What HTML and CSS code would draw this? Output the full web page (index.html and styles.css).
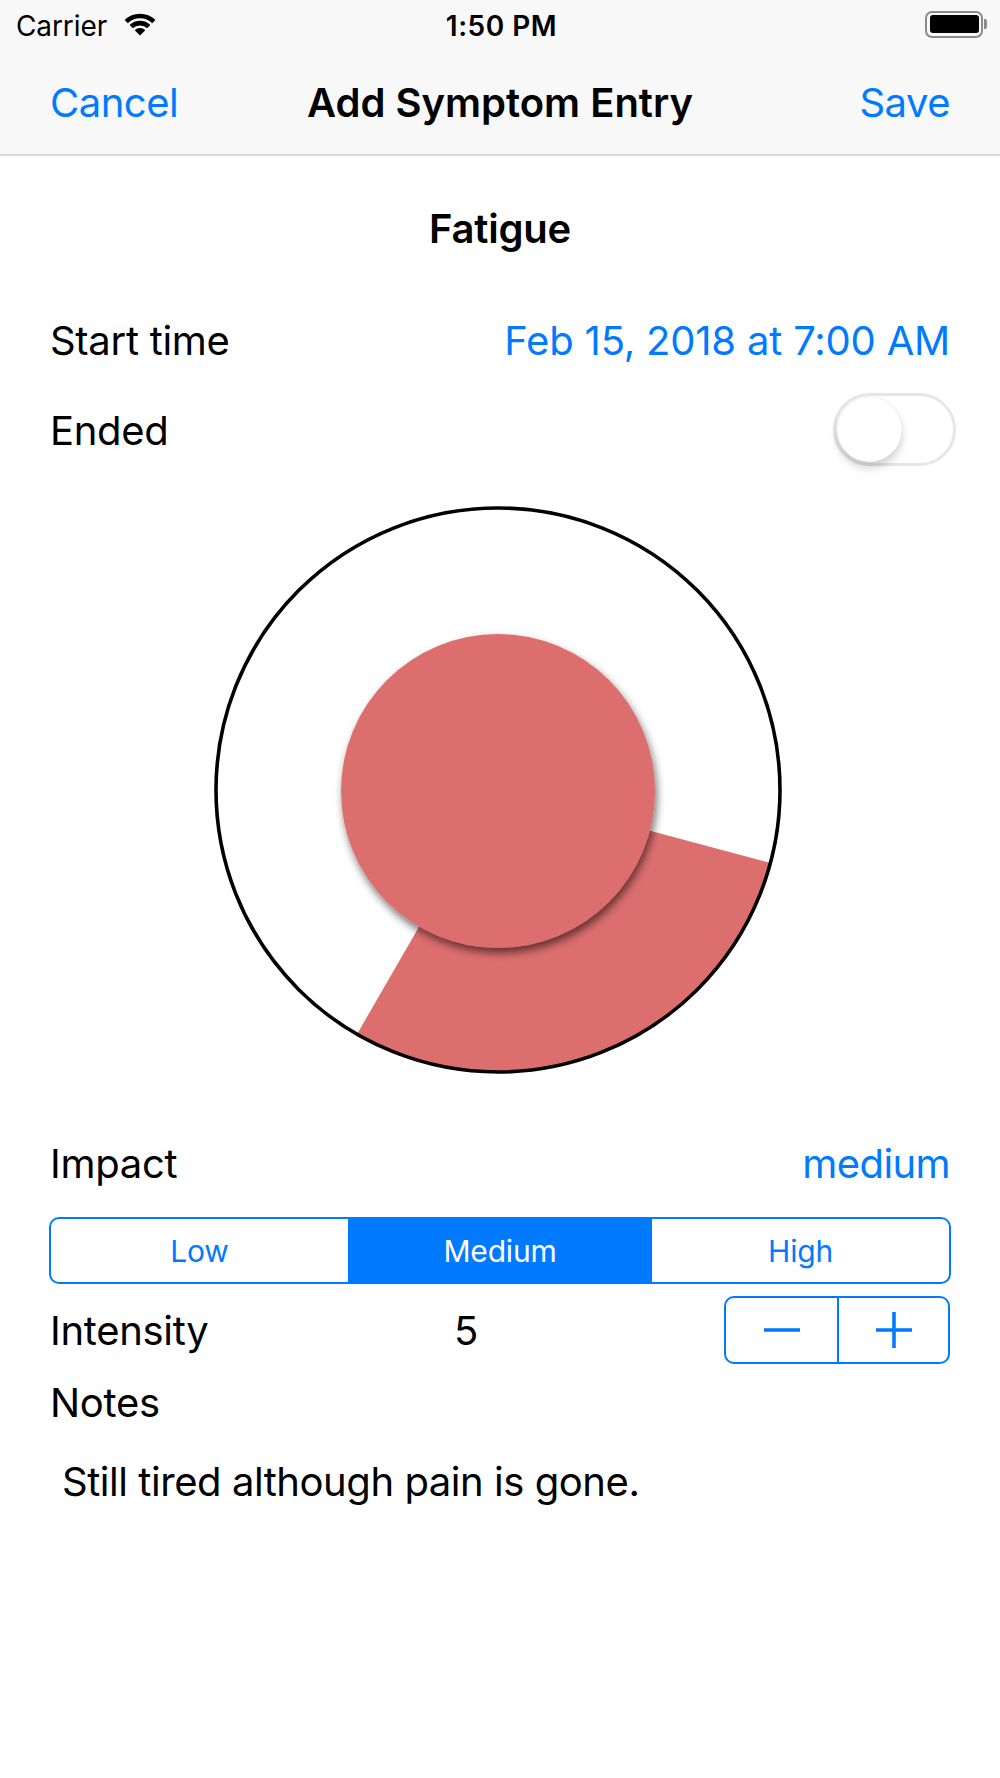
FILE: index.html
```html
<!DOCTYPE html>
<html>
<head>
<meta charset="utf-8">
<link rel="stylesheet" href="styles.css">
</head>
<body>
<div class="screen">
  <div class="statusbar">
    <div class="sb-left">
      <span class="carrier">Carrier</span>
      <svg class="wifi" width="34" height="26" viewBox="0 0 34 26">
        <path d="M17 24.5 L11.7 19.2 A7.5 7.5 0 0 1 22.3 19.2 Z" fill="#000"/>
        <path d="M8.2 15.7 A12.5 12.5 0 0 1 25.8 15.7" fill="none" stroke="#000" stroke-width="4.6"/>
        <path d="M3.2 10.7 A19.5 19.5 0 0 1 30.8 10.7" fill="none" stroke="#000" stroke-width="4.6"/>
      </svg>
    </div>
    <div class="sb-time">1:50 PM</div>
    <div class="sb-right">
      <div class="battery"><div class="battery-fill"></div></div>
      <div class="battery-nub"></div>
    </div>
  </div>
  <div class="navbar">
    <span class="nav-btn nav-left">Cancel</span>
    <span class="nav-title">Add Symptom Entry</span>
    <span class="nav-btn nav-right">Save</span>
  </div>
  <div class="content">
    <div class="symptom">Fatigue</div>
    <div class="row row-start">
      <span class="label">Start time</span>
      <span class="value-blue">Feb 15, 2018 at 7:00 AM</span>
    </div>
    <div class="row row-ended">
      <span class="label">Ended</span>
      <div class="toggle"><div class="knob"></div></div>
    </div>
    <div class="chart">
      <svg width="600" height="600" viewBox="0 0 600 600">
        <defs>
          <filter id="sh" x="-20%" y="-20%" width="140%" height="140%">
            <feDropShadow dx="2" dy="5" stdDeviation="4" flood-color="#000" flood-opacity="0.55"/>
          </filter>
        </defs>
        <path d="M298 300 L570.4 373 A282 282 0 0 1 157 544.2 Z" fill="#DD6E6E"/>
        <circle cx="298" cy="300" r="282" fill="none" stroke="#000" stroke-width="3.6"/>
        <circle cx="298" cy="301" r="157" fill="#DD6E6E" filter="url(#sh)"/>
      </svg>
    </div>
    <div class="row row-impact">
      <span class="label">Impact</span>
      <span class="value-blue value-impact">medium</span>
    </div>
    <div class="segmented">
      <div class="seg">Low</div>
      <div class="seg seg-active">Medium</div>
      <div class="seg">High</div>
    </div>
    <div class="row row-intensity">
      <span class="label label-int">Intensity</span>
      <span class="int-value">5</span>
      <div class="stepper">
        <div class="step">
          <svg width="38" height="38" viewBox="0 0 38 38"><path d="M1 19 H37" stroke="#007AFF" stroke-width="3.6"/></svg>
        </div>
        <div class="step step-plus">
          <svg width="38" height="38" viewBox="0 0 38 38"><path d="M1 19 H37 M19 1 V37" stroke="#007AFF" stroke-width="3.6"/></svg>
        </div>
      </div>
    </div>
    <div class="row row-notes">
      <span class="label">Notes</span>
    </div>
    <div class="notes-text">Still tired although pain is gone.</div>
  </div>
</div>
</body>
</html>
```

FILE: styles.css
```css
* { box-sizing: border-box; }
html, body { margin: 0; padding: 0; background: #fff; }
body {
  width: 1000px;
  height: 1778px;
  font-family: "Inter", "Roboto", "Liberation Sans", sans-serif;
  color: #000;
  overflow: hidden;
}
.screen { width: 1000px; }

.statusbar {
  height: 48px;
  background: #F8F8F8;
  display: grid;
  grid-template-columns: 1fr auto 1fr;
  align-items: center;
  padding: 4px 13px 0 16px;
}
.sb-left { display: flex; align-items: center; gap: 16px; }
.carrier { font-size: 28px; letter-spacing: -0.1px; }
.wifi { display: block; margin-top: -4px; }
.sb-time { font-size: 28px; font-weight: 600; letter-spacing: 0.5px; }
.sb-right { display: flex; align-items: center; justify-content: flex-end; margin-top: -4px; }
.battery {
  width: 58px; height: 27px;
  border: 2.5px solid #8A8A8A;
  border-radius: 7px;
  padding: 2.5px;
}
.battery-fill { width: 100%; height: 100%; background: #000; border-radius: 3px; }
.battery-nub { width: 3px; height: 10px; background: #8A8A8A; border-radius: 0 2px 2px 0; margin-left: 1px; }

.navbar {
  height: 108px;
  background: #F8F8F8;
  border-bottom: 2px solid #D9D9D9;
  display: grid;
  grid-template-columns: 1fr auto 1fr;
  align-items: center;
  padding: 2px 50px 0 50px;
}
.nav-btn { font-size: 40px; color: #007AFF; letter-spacing: -0.5px; }
.nav-right { justify-self: end; }
.nav-title { font-size: 40px; font-weight: 600; letter-spacing: 0; }

.content { padding: 0 50px; }
.symptom {
  margin-top: 43px;
  height: 60px;
  line-height: 60px;
  text-align: center;
  font-size: 40px;
  font-weight: 600;
  letter-spacing: -0.2px;
}
.row { display: flex; align-items: center; justify-content: space-between; }
.label { font-size: 40px; letter-spacing: -0.3px; }
.value-blue { font-size: 40px; color: #007AFF; letter-spacing: -0.2px; }
.value-impact { letter-spacing: -0.6px; }
.row-start { margin-top: 51px; height: 60px; }
.row-ended { margin-top: 22px; height: 76px; }

.toggle {
  position: relative;
  width: 123px; height: 73px;
  border: 3px solid #E6E6E6;
  border-radius: 37px;
  background: #fff;
  margin-right: -6px;
  margin-top: -2px;
}
.knob {
  position: absolute;
  left: 1px; top: 1px;
  width: 65px; height: 65px;
  border-radius: 50%;
  background: #fff;
  box-shadow: 0 6px 8px rgba(0,0,0,0.18), 0 0 1px rgba(0,0,0,0.2);
}

.chart { margin-top: 22px; height: 600px; display: flex; justify-content: center; }
.chart svg { display: block; }

.row-impact { margin-top: 48px; height: 50px; }

.segmented {
  margin-top: 29px;
  margin-left: -1px;
  margin-right: -1px;
  height: 67px;
  display: grid;
  grid-template-columns: 297px 304px 1fr;
  border: 2.5px solid #007AFF;
  border-radius: 10px;
  overflow: hidden;
}
.seg {
  display: flex; align-items: center; justify-content: center;
  font-size: 30px; color: #007AFF; letter-spacing: -0.2px;
}
.seg-active { background: #007AFF; color: #fff; }

.row-intensity { margin-top: 12px; height: 68px; justify-content: flex-start; }
.label-int { width: 404px; }
.int-value { font-size: 40px; }
.stepper {
  margin-left: auto;
  width: 226px; height: 68px;
  border: 2.5px solid #007AFF;
  border-radius: 10px;
  display: grid;
  grid-template-columns: 1fr 1fr;
}
.step { display: flex; align-items: center; justify-content: center; }
.step svg { display: block; }
.step-plus { border-left: 2.5px solid #007AFF; }

.row-notes { margin-top: 13px; height: 50px; }
.notes-text {
  margin-top: 30px;
  height: 50px;
  line-height: 50px;
  padding-left: 12px;
  font-size: 40px;
  letter-spacing: -0.45px;
}
```
